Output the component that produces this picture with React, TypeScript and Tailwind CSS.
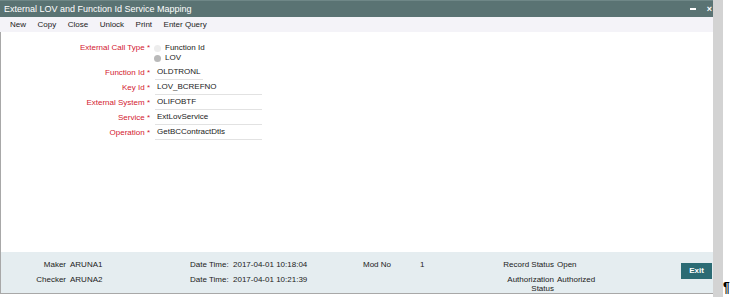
export default function App() {
  const tools = ["New", "Copy", "Close", "Unlock", "Print", "Enter Query"];
  const rows: { label: string; value: string; w: string }[] = [
    { label: "Function Id", value: "OLDTRONL", w: "w-[48px]" },
    { label: "Key Id", value: "LOV_BCREFNO", w: "w-[107px]" },
    { label: "External System", value: "OLIFOBTF", w: "w-[107px]" },
    { label: "Service", value: "ExtLovService", w: "w-[107px]" },
    { label: "Operation", value: "GetBCContractDtls", w: "w-[107px]" },
  ];
  return (
    <div className="flex h-[297px] w-[730px] overflow-hidden bg-white font-['Liberation_Sans',Arial,sans-serif] text-[#222]">
      <div className="flex w-[713px] shrink-0 flex-col overflow-hidden">
        {/* title bar */}
        <div className="flex h-[17px] shrink-0 items-center overflow-hidden border-t border-[#6f8787] bg-[#5a7373] pl-[4px] text-[9px] text-white">
          <span className="leading-[16px]">External LOV and Function Id Service Mapping</span>
          <div className="ml-auto mr-[1px] flex shrink-0 items-center gap-[11px]">
            <span className="block h-[2px] w-[6px] bg-white" />
            <span className="text-[9px] font-bold leading-none">×</span>
          </div>
        </div>
        {/* toolbar */}
        <div className="flex h-[15px] shrink-0 items-center gap-[11.5px] bg-[#f4f3f8] pl-[10px] text-[8px] leading-[15px] text-[#222]">
          {tools.map((t) => (
            <span key={t}>{t}</span>
          ))}
        </div>
        {/* body */}
        <div className="flex flex-1 flex-col border-b border-l border-[#a8a8a8]">
          <div className="flex flex-col pt-[11px] text-[8px]">
            <div className="flex">
              <div className="w-[149px] text-right leading-[10px] text-[#d3202f]">External Call Type *</div>
              <div className="ml-[5px] flex flex-col">
                <div className="flex h-[10px] items-center">
                  <span className="-ml-[1px] block h-[7px] w-[7px] rounded-full bg-[#ededed]" />
                  <span className="ml-[4px] leading-[10px]">Function Id</span>
                </div>
                <div className="flex h-[10px] items-center">
                  <span className="-ml-[1px] block h-[7px] w-[7px] rounded-full bg-[#b9b9b9]" />
                  <span className="ml-[4px] leading-[10px]">LOV</span>
                </div>
              </div>
            </div>
            <div className="mt-[2px] flex flex-col">
              {rows.map((r) => (
                <div key={r.label} className="flex h-[15px]">
                  <div className="w-[149px] text-right leading-[15px] text-[#d3202f]">{r.label} *</div>
                  <div className={`ml-[5px] h-[15px] border-b border-[#e2e2e2] pl-[2px] leading-[14px] ${r.w}`}>{r.value}</div>
                </div>
              ))}
            </div>
          </div>
          {/* footer */}
          <div className="mt-auto grid h-[41px] shrink-0 grid-cols-[69px_120px_43px_130px_57px_60px_77px_124px_31px] grid-rows-[16px_auto] bg-[#e5edf0] pt-[5px] text-[8px] text-[#222]">
            <div className="pr-[4px] text-right leading-[16px]">Maker</div>
            <div className="leading-[16px]">ARUNA1</div>
            <div className="leading-[16px]">Date Time:</div>
            <div className="leading-[16px]">2017-04-01 10:18:04</div>
            <div className="leading-[16px]">Mod No</div>
            <div className="leading-[16px]">1</div>
            <div className="pr-[3px] text-right leading-[16px]">Record Status</div>
            <div className="leading-[16px]">Open</div>
            <div className="row-span-2 self-start pt-[6px]">
              <div className="flex h-[16px] w-[31px] items-center justify-center bg-[#2b6b74] text-[8px] font-bold text-white">Exit</div>
            </div>
            <div className="pr-[4px] pt-[2px] text-right leading-[9px]">Checker</div>
            <div className="pt-[2px] leading-[9px]">ARUNA2</div>
            <div className="pt-[2px] leading-[9px]">Date Time:</div>
            <div className="pt-[2px] leading-[9px]">2017-04-01 10:21:39</div>
            <div />
            <div />
            <div className="pr-[3px] pt-[2px] text-right leading-[9px]">
              Authorization
              <br />
              Status
            </div>
            <div className="pt-[2px] leading-[9px]">Authorized</div>
          </div>
        </div>
        <div className="h-[3px] shrink-0" />
      </div>
      <div className="w-[10px] shrink-0 bg-[#d3d3d3]" />
      <div className="flex w-[7px] shrink-0 flex-col items-start justify-end pb-[3px]">
        <span className="inline-block origin-bottom scale-y-[1.2] text-[12px] font-bold leading-[12px] text-black">¶</span>
      </div>
    </div>
  );
}
